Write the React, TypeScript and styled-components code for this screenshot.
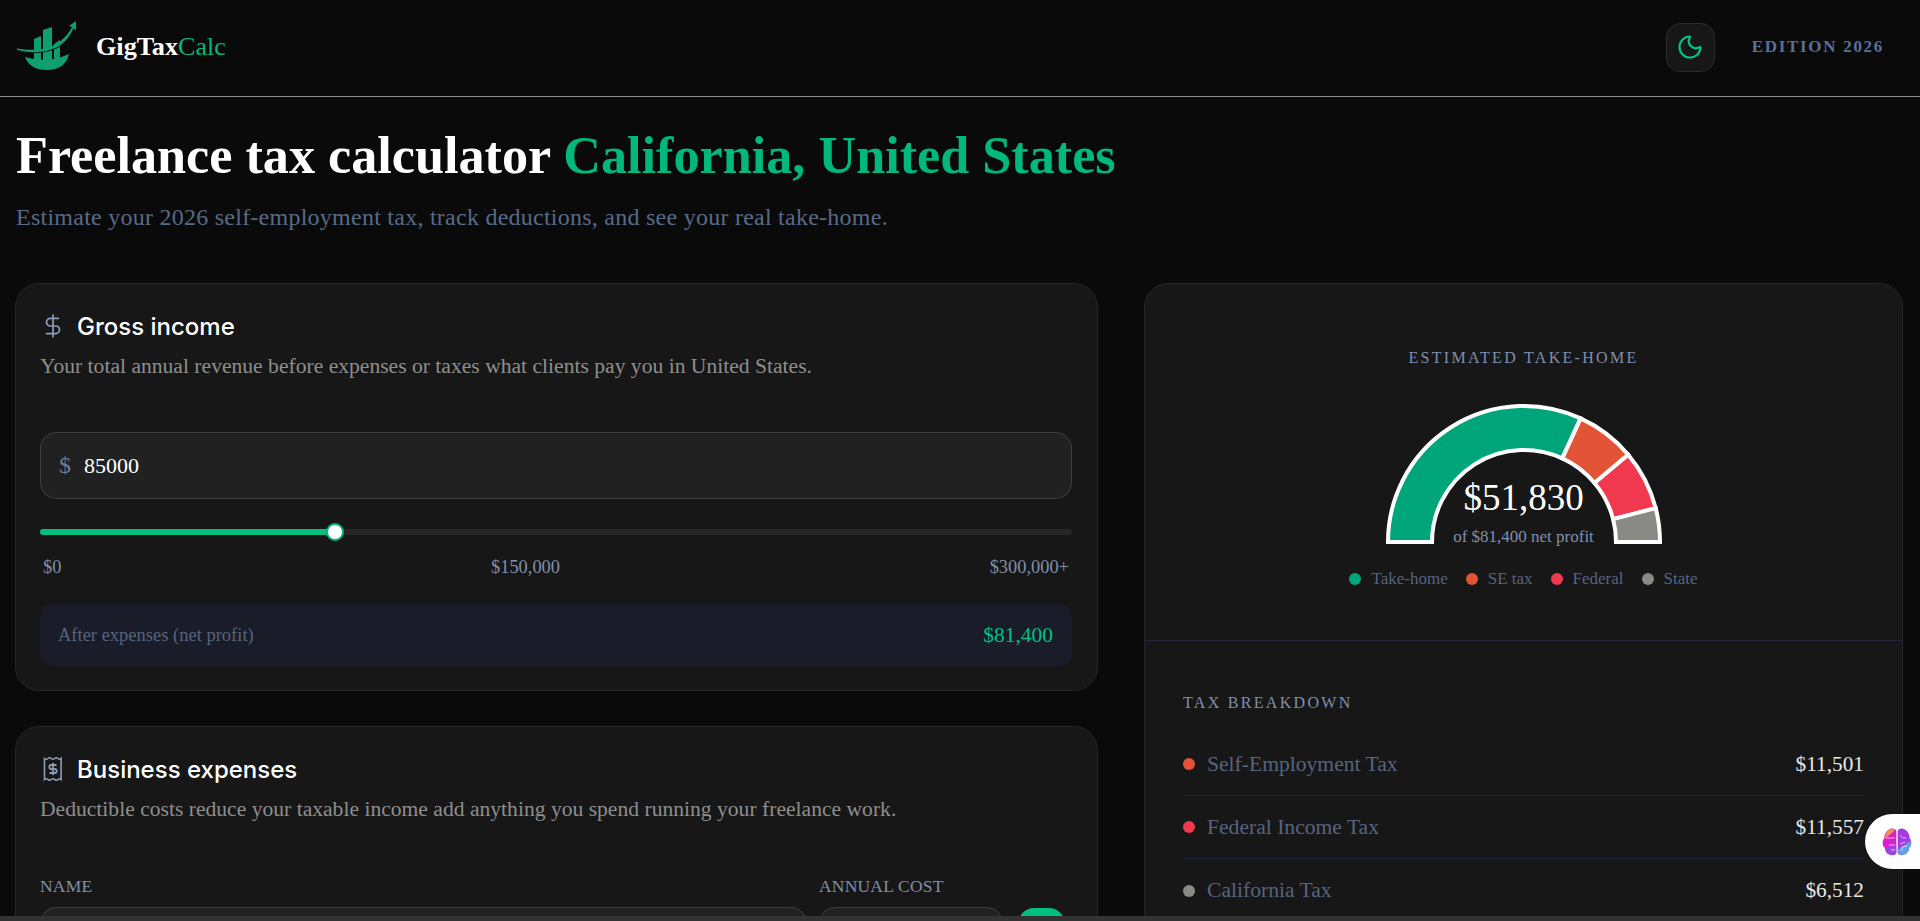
import React from 'react'
import styled, { createGlobalStyle } from 'styled-components'
import { DollarSign, Moon } from 'lucide-react'

const serif = '"Liberation Serif", "Times New Roman", serif'

const GlobalStyle = createGlobalStyle`
	html, body {
		margin: 0;
		height: 100%;
		overflow: hidden;
		background: #0a0a0a;
		font-family: ${serif};
	}
	* {
		box-sizing: border-box;
	}
`

const Header = styled.header`
	height: 97px;
	display: flex;
	align-items: center;
	justify-content: space-between;
	padding: 0 36px 2px 16px;
	border-bottom: 1px solid #8c8c8c;
`

const Brand = styled.div`
	display: flex;
	align-items: center;
	gap: 20px;
`

const BrandName = styled.span`
	font-size: 26.2px;
	font-weight: 700;
	color: #fff;

	em {
		font-style: normal;
		font-weight: 400;
		color: #00b77d;
	}
`

const HeaderRight = styled.div`
	display: flex;
	align-items: center;
	gap: 37px;
`

const ThemeButton = styled.button`
	width: 49px;
	height: 49px;
	display: grid;
	place-items: center;
	padding: 0;
	background: #171717;
	border: 1px solid #2b2b2b;
	border-radius: 14px;
	color: #00c985;
`

const Edition = styled.span`
	font-size: 17px;
	font-weight: 700;
	letter-spacing: 1.7px;
	color: #5a7099;
`

const Main = styled.main`
	padding: 0 17px 0 15px;
`

const Title = styled.h1`
	margin: 26px 0 0 1px;
	font-size: 52.2px;
	line-height: 64px;
	font-weight: 700;
	color: #fff;

	span {
		color: #00b77d;
	}
`

const Subtitle = styled.p`
	margin: 16px 0 0 1px;
	font-size: 24px;
	line-height: 28px;
	letter-spacing: 0.25px;
	color: #586a88;
`

const Columns = styled.div`
	display: grid;
	grid-template-columns: 1083px 759px;
	justify-content: space-between;
	align-items: start;
	margin-top: 52px;
`

const Stack = styled.div`
	display: flex;
	flex-direction: column;
	gap: 35px;
`

const Card = styled.section`
	background: #171717;
	border: 1px solid #262626;
	border-radius: 24px;
	padding: 25px 25px 24px 24px;
`

const CardHead = styled.div`
	display: flex;
	align-items: center;
	gap: 11px;
	height: 34px;
	color: #8b9cb6;
`

const CardTitle = styled.h2`
	margin: 0;
	font-family: Inter, "Liberation Sans", sans-serif;
	font-size: 24px;
	font-weight: 500;
	color: #fff;
`

const CardText = styled.p`
	margin: 7px 0 0;
	font-size: 21.6px;
	line-height: 32px;
	color: #8e8e8e;
`

const AmountField = styled.div`
	display: flex;
	align-items: center;
	gap: 13px;
	height: 67px;
	margin-top: 50px;
	padding: 0 18px;
	background: #212121;
	border: 1px solid #3f3f3f;
	border-radius: 16px;
	font-size: 22px;
	color: #fff;

	i {
		font-style: normal;
		font-size: 24px;
		color: #6b7d9c;
	}
`

const Slider = styled.div`
	position: relative;
	height: 6px;
	margin-top: 30px;
	background: #262626;
	border-radius: 3px;
`

const SliderFill = styled.div`
	height: 100%;
	background: #00c080;
	border-radius: 3px;
`

const SliderThumb = styled.div`
	position: absolute;
	top: -6px;
	width: 18px;
	height: 18px;
	margin-left: -9px;
	background: #fff;
	border: 2px solid #00b77d;
	border-radius: 50%;
`

const SliderLegend = styled.div`
	display: flex;
	justify-content: space-between;
	margin-top: 20px;
	padding: 0 3px;
	font-size: 18.4px;
	line-height: 24px;
	color: #7f90ad;
`

const NetBox = styled.div`
	display: flex;
	align-items: center;
	justify-content: space-between;
	height: 62px;
	margin-top: 25px;
	padding: 0 19px 0 18px;
	background: #1a1d29;
	border-radius: 14px;
	font-size: 18.5px;
	color: #56637d;

	strong {
		font-size: 21.5px;
		font-weight: 400;
		color: #00c080;
	}
`

const ExpenseGrid = styled.div`
	display: grid;
	grid-template-columns: 767px 184px 50px;
	gap: 12px;
	margin-top: 49px;
`

const FieldLabel = styled.div`
	font-size: 17.5px;
	line-height: 24px;
	letter-spacing: 0.2px;
	color: #7f90ad;
	margin-bottom: 9px;
`

const Input = styled.div`
	height: 56px;
	background: #212121;
	border: 1px solid #3f3f3f;
	border-radius: 16px;
`

const AddButton = styled.div`
	height: 56px;
	margin: 34px 0 0 3px;
	background: #00c080;
	border-radius: 16px;
`

const Summary = styled.section`
	background: #171717;
	border: 1px solid #262626;
	border-radius: 24px;
`

const GaugeSection = styled.div`
	height: 357px;
	padding-top: 64px;
	display: flex;
	flex-direction: column;
	align-items: center;
	border-bottom: 1px solid #24283a;
`

const Eyebrow = styled.div`
	font-size: 16px;
	line-height: 20px;
	letter-spacing: 2.3px;
	color: #7f90ad;
`

const Gauge = styled.div`
	position: relative;
	width: 280px;
	height: 144px;
	margin-top: 33px;

	svg {
		display: block;
	}
`

const GaugeValue = styled.div`
	position: absolute;
	left: 0;
	right: 0;
	bottom: -3px;
	text-align: center;
	color: #7f90ad;
	font-size: 17px;
	line-height: 22px;

	b {
		display: block;
		margin-bottom: 6px;
		font-size: 37px;
		font-weight: 400;
		line-height: 44px;
		color: #fff;
	}
`

const Legend = styled.div`
	display: flex;
	gap: 18px;
	margin-top: 24px;
`

const LegendItem = styled.span`
	display: flex;
	align-items: center;
	gap: 10px;
	font-size: 17px;
	line-height: 20px;
	color: #566480;
`

const Dot = styled.i<{ $color: string }>`
	flex: none;
	width: 12px;
	height: 12px;
	border-radius: 50%;
	background: ${p => p.$color};
`

const Breakdown = styled.div`
	padding: 52px 38px 90px;
`

const Rows = styled.div`
	margin-top: 20px;
`

const Row = styled.div`
	display: flex;
	align-items: center;
	gap: 12px;
	height: 63px;
	border-bottom: 1px solid #1c2540;
	font-size: 21.6px;
	color: #566480;

	b {
		margin-left: auto;
		font-size: 21.3px;
		font-weight: 400;
		color: #e8e8e8;
	}

	&:last-child {
		border-bottom: 0;
	}
`

const BrainTab = styled.div`
	position: fixed;
	right: 0;
	top: 814px;
	width: 55px;
	height: 55px;
	display: flex;
	align-items: center;
	padding-left: 17px;
	background: #fff;
	border-radius: 28px 0 0 28px;
`

const BottomStrip = styled.div`
	position: fixed;
	left: 0;
	right: 0;
	bottom: 0;
	height: 5px;
	background: #333;
`

const segments = [
	{ label: 'Take-home', value: 51830, color: '#00a67a' },
	{ label: 'SE tax', value: 11501, color: '#e35336' },
	{ label: 'Federal', value: 11557, color: '#f0384f' },
	{ label: 'State', value: 6512, color: '#8a8a85' }
]

const rows = [
	{ label: 'Self-Employment Tax', amount: '$11,501', color: '#e35336' },
	{ label: 'Federal Income Tax', amount: '$11,557', color: '#f0384f' },
	{ label: 'California Tax', amount: '$6,512', color: '#8a8a85' }
]

// donut slice from the left end of the half circle, going clockwise
function slicePath(from: number, to: number) {
	const cx = 140
	const cy = 141
	const outer = 136
	const inner = 92
	const point = (r: number, a: number) => {
		const t = Math.PI - a * Math.PI
		return `${(cx + r * Math.cos(t)).toFixed(2)} ${(cy - r * Math.sin(t)).toFixed(2)}`
	}
	return `M${point(outer, from)} A${outer} ${outer} 0 0 1 ${point(outer, to)} L${point(inner, to)} A${inner} ${inner} 0 0 0 ${point(inner, from)} Z`
}

function GaugeChart() {
	const total = segments.reduce((sum, s) => sum + s.value, 0)
	let acc = 0
	return (
		<svg width="280" height="144" viewBox="0 0 280 144">
			{segments.map(s => {
				const from = acc / total
				acc += s.value
				return (
					<path
						key={s.label}
						d={slicePath(from, acc / total)}
						fill={s.color}
						stroke="#fff"
						strokeWidth="4"
					/>
				)
			})}
		</svg>
	)
}

// viewBox is in page pixels, taken off the logo in the header
function Logo() {
	return (
		<svg width="60" height="52" viewBox="16 21 60 52" fill="#0f9f6e">
			<path d="M25 57 Q47 64 69 54 Q65 70 47 70 Q30 70 25 57 Z" />
			<path d="M34 39 L41 36 L41 62 L34 60 Z" />
			<path d="M43 30 L52 27 L52 62 L43 62 Z" />
			<path d="M54 44 L60 40 L60 60 L54 62 Z" />
			<path d="M28 52.500 Q46 54 61 46" stroke="#0a0a0a" strokeWidth="1" fill="none" />
			<path d="M17 48.500 Q45 53 60 41.500 Q68 35 72 27 L69 26 L76 21 L76 30 L73.500 28.500 Q68 40 60 45.500 Q42 56 17 50 Z" />
		</svg>
	)
}

function ReceiptDollar() {
	return (
		<svg
			width="26"
			height="26"
			viewBox="0 0 26 26"
			fill="none"
			stroke="currentColor"
			strokeWidth="1.6"
		>
			<path d="M4.500 2.500 q1.700 1.500 3.400 0 t3.400 0 t3.400 0 t3.400 0 t3 0 V23.500 q-1.500 -1.500 -3 0 t-3.400 0 t-3.400 0 t-3.400 0 t-3.400 0 Z" />
			<path d="M16.500 9 H11.300 a2 2 0 0 0 0 4 h3.400 a2 2 0 0 1 0 4 H9.500 M13 7 V19" strokeWidth="1.800" />
		</svg>
	)
}

function Brain() {
	return (
		<svg width="30" height="30" viewBox="0 0 30 30">
			<path d="M8 2 C11 1 14 2 14.300 4 L14.300 26 C14 28 10 29 8 27.500 C4 27 3 23 3 21 C0 19 0 13 2.500 11 C2 7 5 3 8 2 Z" fill="#dc1fc8" />
			<path d="M8 2 C10 1.500 12 2 13 3 L9 7 L3 11 C3 7 6 2.500 8 2 Z" fill="#ef8f5a" />
			<path d="M3 21 L14.300 18 L14.300 26 C14 28 10 29 8 27.500 C5 27 3.500 24 3 21 Z" fill="#9a45e0" />
			<path d="M21.700 2 C19 1 16 2 15.700 4 L15.700 26 C16 28 20 29 22 27.500 C26 27 27 23 27 21 C30 19 30 13 27.500 11 C28 7 25 3 21.700 2 Z" fill="#a53be0" />
			<path d="M28 14 C30 17 29 19.500 27 21 C27 24 25 27 22 27.500 C20 28.500 17 28 15.700 26 L15.700 23 Z" fill="#5aa4e6" />
			<path d="M4 11 H13 M7 18 H13 M9 23 L13 23 M18 8 L21 11 H24 M18 17 L23 15 M20 24 L20 20 L25 19" stroke="#f6d9f6" strokeWidth="0.8" fill="none" />
		</svg>
	)
}

export default function App() {
	const sliderPos = `${(85000 / 300000) * 100 + 0.3}%`
	return (
		<>
			<GlobalStyle />
			<Header>
				<Brand>
					<Logo />
					<BrandName>
						GigTax<em>Calc</em>
					</BrandName>
				</Brand>
				<HeaderRight>
					<ThemeButton>
						<Moon size={28} strokeWidth={1.8} />
					</ThemeButton>
					<Edition>EDITION 2026</Edition>
				</HeaderRight>
			</Header>
			<Main>
				<Title>
					Freelance tax calculator <span>California, United States</span>
				</Title>
				<Subtitle>
					Estimate your 2026 self-employment tax, track deductions, and see
					your real take-home.
				</Subtitle>
				<Columns>
					<Stack>
						<Card>
							<CardHead>
								<DollarSign size={26} strokeWidth={1.6} />
								<CardTitle>Gross income</CardTitle>
							</CardHead>
							<CardText>
								Your total annual revenue before expenses or taxes what clients
								pay you in United States.
							</CardText>
							<AmountField>
								<i>$</i>
								85000
							</AmountField>
							<Slider>
								<SliderFill style={{ width: sliderPos }} />
								<SliderThumb style={{ left: sliderPos }} />
							</Slider>
							<SliderLegend>
								<span>$0</span>
								<span>$150,000</span>
								<span>$300,000+</span>
							</SliderLegend>
							<NetBox>
								After expenses (net profit)
								<strong>$81,400</strong>
							</NetBox>
						</Card>
						<Card>
							<CardHead>
								<ReceiptDollar />
								<CardTitle>Business expenses</CardTitle>
							</CardHead>
							<CardText>
								Deductible costs reduce your taxable income add anything you
								spend running your freelance work.
							</CardText>
							<ExpenseGrid>
								<div>
									<FieldLabel>NAME</FieldLabel>
									<Input />
								</div>
								<div>
									<FieldLabel>ANNUAL COST</FieldLabel>
									<Input />
								</div>
								<AddButton />
							</ExpenseGrid>
						</Card>
					</Stack>
					<Summary>
						<GaugeSection>
							<Eyebrow>ESTIMATED TAKE-HOME</Eyebrow>
							<Gauge>
								<GaugeChart />
								<GaugeValue>
									<b>$51,830</b>
									of $81,400 net profit
								</GaugeValue>
							</Gauge>
							<Legend>
								{segments.map(s => (
									<LegendItem key={s.label}>
										<Dot $color={s.color} />
										{s.label}
									</LegendItem>
								))}
							</Legend>
						</GaugeSection>
						<Breakdown>
							<Eyebrow>TAX BREAKDOWN</Eyebrow>
							<Rows>
								{rows.map(r => (
									<Row key={r.label}>
										<Dot $color={r.color} />
										{r.label}
										<b>{r.amount}</b>
									</Row>
								))}
							</Rows>
						</Breakdown>
					</Summary>
				</Columns>
			</Main>
			<BrainTab>
				<Brain />
			</BrainTab>
			<BottomStrip />
		</>
	)
}
